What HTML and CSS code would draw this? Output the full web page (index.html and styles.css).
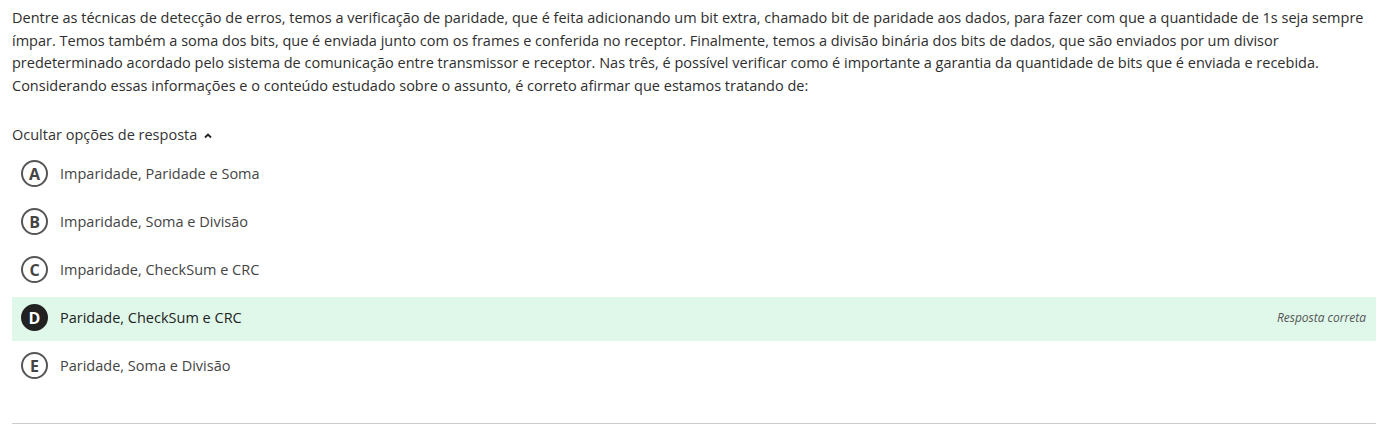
FILE: index.html
```html
<!DOCTYPE html>
<html lang="pt">
<head>
<meta charset="utf-8">
<link rel="stylesheet" href="styles.css">
</head>
<body>
<div class="question">
  <p class="statement">Dentre as técnicas de detecção de erros, temos a verificação de paridade, que é feita adicionando um bit extra, chamado bit de paridade aos dados, para fazer com que a quantidade de 1s seja sempre ímpar. Temos também a soma dos bits, que é enviada junto com os frames e conferida no receptor. Finalmente, temos a divisão binária dos bits de dados, que são enviados por um divisor predeterminado acordado pelo sistema de comunicação entre transmissor e receptor. Nas três, é possível verificar como é importante a garantia da quantidade de bits que é enviada e recebida. Considerando essas informações e o conteúdo estudado sobre o assunto, é correto afirmar que estamos tratando de:</p>
  <div class="toggle">Ocultar opções de resposta
    <svg class="chev" width="10" height="8" viewBox="0 0 10 8"><path d="M2 5.5 L5 2.5 L8 5.5" fill="none" stroke="#222" stroke-width="1.8"/></svg>
  </div>
  <ul class="options">
    <li class="option"><span class="letter">A</span><span class="text">Imparidade, Paridade e Soma</span></li>
    <li class="option"><span class="letter">B</span><span class="text">Imparidade, Soma e Divisão</span></li>
    <li class="option"><span class="letter">C</span><span class="text">Imparidade, CheckSum e CRC</span></li>
    <li class="option correct"><span class="letter">D</span><span class="text">Paridade, CheckSum e CRC</span><span class="tag">Resposta correta</span></li>
    <li class="option"><span class="letter">E</span><span class="text">Paridade, Soma e Divisão</span></li>
  </ul>
  <hr class="divider">
</div>
</body>
</html>
```
FILE: styles.css
```css
* { box-sizing: border-box; }
body {
  margin: 0;
  background: #fff;
  font-family: "Open Sans", "Noto Sans", sans-serif;
  color: #333;
}
.question {
  padding: 7px 15px 0 12px;
}
.statement {
  margin: 0;
  font-size: 14.5px;
  line-height: 22.7px;
  color: #2e2e2e;
}
.toggle {
  margin-top: 27px;
  font-size: 14.5px;
  line-height: 20px;
  color: #333;
  display: flex;
  align-items: center;
  gap: 6px;
}
.chev { margin-top: 2px; }
.options {
  list-style: none;
  margin: 8px 0 0 0;
  padding: 0;
  display: flex;
  flex-direction: column;
  gap: 4px;
}
.option {
  height: 44px;
  display: flex;
  align-items: center;
  padding: 0 10px 2px 9px;
  font-size: 14.5px;
  color: #444;
}
.letter {
  width: 27px;
  height: 27px;
  border: 2px solid #555;
  border-radius: 50%;
  display: flex;
  align-items: center;
  justify-content: center;
  font-weight: 700;
  font-size: 16px;
  line-height: 1;
  color: #444;
  margin-right: 12px;
  flex: none;
}
.text { flex: 1; }
.correct {
  background: #e0f8ea;
  color: #222;
}
.correct .letter {
  background: #222;
  border-color: #222;
  color: #fff;
}
.tag {
  font-style: italic;
  font-size: 12px;
  color: #555;
}
.divider {
  margin: 34px 0 0 0;
  border: 0;
  border-top: 1px solid #ccc;
}
```
